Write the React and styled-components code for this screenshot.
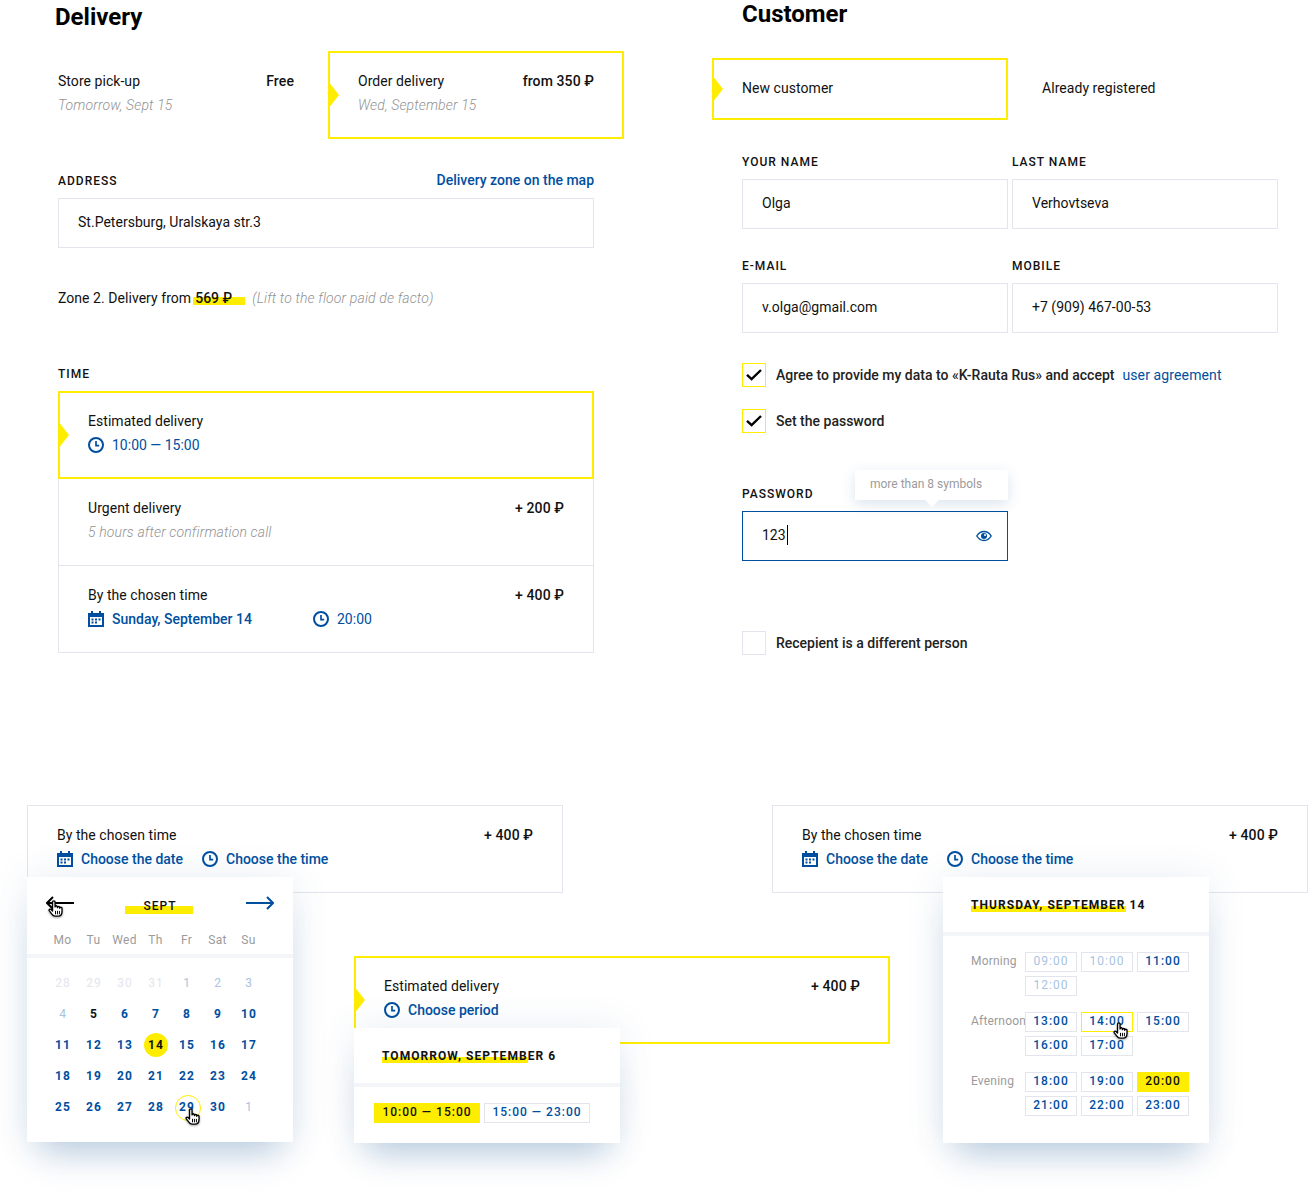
import React from "react";
import styled, { createGlobalStyle, css } from "styled-components";

const YELLOW = "#ffed00";
const BLUE = "#004f9f";
const LINE = "#e3e5ec";
const GREY = "#9b9b9b";

const Global = createGlobalStyle`
  html, body { margin: 0; padding: 0; background: #fff; }
  body { font-family: Roboto, "Noto Sans", sans-serif; font-size: 14px; line-height: 24px; color: #111; }
  * { box-sizing: border-box; }
`;

const Page = styled.div`
  position: relative;
  width: 1308px;
  height: 1193px;
  overflow: hidden;
`;
const Top = styled.div`display: flex; align-items: flex-start;`;
const DeliveryCol = styled.section`width: 536px; margin-left: 58px; padding-top: 3px;`;
const CustomerCol = styled.section`width: 536px; margin-left: 148px;`;
const Title = styled.h1`
  margin: 0 0 0 ${(p) => p.$shift || 0}px;
  font-size: 24px;
  line-height: 28px;
  font-weight: 700;
  color: #000;
`;
const Modes = styled.div`display: flex; width: 566px; margin-top: 20px;`;
const PlainMode = styled.div`width: 270px; padding: 18px 34px 0 0;`;
const selectedFrame = css`
  position: relative;
  border: 2px solid ${YELLOW};
  &::before {
    content: "";
    position: absolute;
    left: 0;
    top: 50%;
    width: 9px;
    height: 23px;
    transform: translateY(-50%);
    background: ${YELLOW};
    clip-path: polygon(0 0, 100% 50%, 0 100%);
  }
`;
const ActiveMode = styled.div`
  ${selectedFrame}
  width: 296px;
  height: 88px;
  padding: 16px 28px;
`;
const Head = styled.div`display: flex; justify-content: space-between; align-items: center;`;
const Name = styled.span`font-weight: 400; letter-spacing: 0.05px; color: #111;`;
const Price = styled.span`font-weight: 500; letter-spacing: 0.1px; color: #111;`;
const Hint = styled.div`font-style: italic; font-weight: 300; letter-spacing: 0.14px; color: #929292;`;
const LabelRow = styled.div`
  display: flex; justify-content: space-between; align-items: center;
  margin-top: ${(p) => p.$top}px;
  height: 16px;
`;
const Label = styled.div`
  font-size: 12px; line-height: 16px; font-weight: 500; letter-spacing: 1px; color: #111;
`;
const TextLink = styled.a`position: relative; top: -1px; color: ${BLUE}; font-weight: 500;`;
const Input = styled.input`
  display: block;
  width: 100%;
  height: 50px;
  margin-top: 9px;
  padding: 0 19px 2px;
  border: 1px solid ${LINE};
  border-radius: 0;
  outline: none;
  background: #fff;
  font: 400 14px Roboto, sans-serif;
  letter-spacing: 0.02px;
  color: #111;
`;
const Zone = styled.div`margin-top: 40px; line-height: 20px; display: flex; letter-spacing: 0.05px;`;
const Amount = styled.span`
  margin-left: 2px;
  padding: 0 13px 0 2px;
  font-weight: 500;
  letter-spacing: 0;
  background: linear-gradient(${YELLOW}, ${YELLOW}) no-repeat 0 9px / 100% 8px;
`;
const ZoneNote = styled(Hint)`margin-left: 7px; line-height: 20px;`;
const TimeList = styled.div`margin-top: 9px;`;
const TimeRow = styled.div`
  height: 87px;
  padding: 17px 29px;
  border: 1px solid ${LINE};
  border-top: 0;
`;
const DemoRow = styled.div`
  ${(p) => p.$selected ? css`
    ${selectedFrame}
    height: 88px;
    padding: 16px 28px;
  ` : css`
    position: relative;
    height: 88px;
    padding: 17px 29px;
    border: 1px solid ${LINE};
  `}
`;
const ActiveTime = styled.div`
  ${selectedFrame}
  height: 88px;
  padding: 16px 28px;
`;
const Choices = styled.div`display: flex; align-items: center;`;
const Choice = styled.div`
  display: flex; align-items: center; gap: 8px;
  width: ${(p) => (p.$w ? p.$w + "px" : "auto")};
  color: ${BLUE};
  font-weight: ${(p) => p.$weight || 500};
  svg { flex: none; }
`;

const Tabs = styled.div`display: flex; margin: 30px 0 0 -30px;`;
const ActiveTab = styled.div`
  ${selectedFrame}
  width: 296px; height: 62px;
  padding: 16px 28px;
`;
const PlainTab = styled.div`padding: 18px 0 0 34px;`;
const Fields = styled.div`
  display: grid;
  grid-template-columns: 266px 266px;
  column-gap: 4px;
  row-gap: 29px;
  margin-top: 34px;
`;
const Check = styled.label`
  display: flex; align-items: center; gap: 10px;
  margin-top: ${(p) => p.$top}px;
  font-weight: 500;
  color: #222;
`;
const Box = styled.span`
  display: flex; align-items: center; justify-content: center;
  flex: none;
  width: 24px; height: 24px;
  border: 1px solid ${(p) => (p.$on ? YELLOW : LINE)};
`;
const AgreeLink = styled.a`margin-left: 8px; color: ${BLUE}; font-weight: 400; letter-spacing: 0.12px;`;
const PasswordField = styled.div`position: relative; width: 266px; margin-top: 53px;`;
const Tooltip = styled.div`
  position: absolute;
  right: 0;
  top: -16px;
  width: 153px;
  height: 30px;
  padding-left: 15px;
  background: #fff;
  font-size: 12px;
  line-height: 28px;
  color: ${GREY};
  box-shadow: 0 4px 14px rgba(30, 90, 150, 0.16);
  &::after {
    content: "";
    position: absolute;
    left: 70px;
    bottom: -7px;
    border: 7px solid transparent;
    border-bottom: 0;
    border-top-color: #fff;
  }
`;
const PasswordBox = styled.div`
  display: flex; align-items: center; justify-content: space-between;
  height: 50px;
  margin-top: 9px;
  padding: 0 15px 0 19px;
  border: 1px solid ${BLUE};
`;
const Typed = styled.span`
  position: relative;
  top: -1px;
  padding-right: 1px;
  border-right: 1px solid #000;
  line-height: 20px;
`;

const Board = styled.div`margin-top: 150px; padding-left: 27px;`;
const BoardRow = styled.div`display: flex; justify-content: space-between;`;
const Demo = styled.div`position: relative; width: 536px;`;
const CenterDemo = styled(Demo)`margin: 63px 0 0 327px;`;
const Popup = styled.div`
  position: absolute;
  z-index: 2;
  left: ${(p) => p.$left || 0}px;
  top: 72px;
  width: 266px;
  background: #fff;
  box-shadow: 0 24px 34px -14px rgba(30, 90, 150, 0.28), 0 0 36px rgba(30, 90, 150, 0.1);
`;
const Nav = styled.div`
  position: relative;
  display: flex; align-items: center; justify-content: space-between;
  height: 52px;
  padding: 0 19px;
`;
const Month = styled.span`
  position: relative; top: 3px; left: -1px;
  padding: 0 16px 0 18px;
  font-size: 12px; line-height: 16px; font-weight: 500; letter-spacing: 1px;
  background: linear-gradient(${YELLOW}, ${YELLOW}) no-repeat 0 8px / 100% 8px;
`;
const Cal = styled.div`
  display: grid;
  grid-template-columns: repeat(7, 31px);
  padding-left: 20px;
`;
const Week = styled(Cal)`margin-top: 3px;`;
const WeekDay = styled.span`
  font-size: 12px; line-height: 16px; text-align: center; color: ${GREY}; letter-spacing: .3px;
`;
const Rule = styled.div`height: 4px; background: #f3f5f9; margin-top: ${(p) => p.$top || 0}px;`;
const Days = styled(Cal)`padding-top: 9px; padding-bottom: 20px;`;
const kinds = {
  off: css`color: ${LINE}; font-weight: 400;`,
  far: css`color: #a9c3e0; font-weight: 400;`,
  black: css`color: #111; font-weight: 700;`,
  on: css`color: ${BLUE}; font-weight: 700;`,
};
const Day = styled.span`
  position: relative;
  height: 31px;
  display: flex; align-items: center; justify-content: center;
  padding-left: 1px;
  font-size: 12px; letter-spacing: 1px;
  z-index: 0;
  ${(p) => kinds[p.$kind]}
  ${(p) => p.$today && css`
    color: #111;
    &::before { content: ""; position: absolute; z-index: -1; left: 3.5px; top: 4px; width: 24px; height: 24px; border-radius: 50%; background: ${YELLOW}; }
  `}
  ${(p) => p.$hover && css`
    &::before { content: ""; position: absolute; z-index: -1; left: 3.5px; top: 4px; width: 24px; height: 24px; border-radius: 50%; border: 1px solid ${YELLOW}; }
  `}
`;
const PopHead = styled.div`height: 55px; padding: 20px 0 0 ${(p) => p.$left}px;`;
const PopTitle = styled.div`
  font-size: 12px; line-height: 16px; font-weight: 700; letter-spacing: 1.05px; color: #111;
  mark { color: inherit; background: linear-gradient(${YELLOW}, ${YELLOW}) no-repeat 0 8px / 100% 8px; }
`;
const Periods = styled.div`display: flex; gap: 4px; padding: 16px 20px 20px;`;
const Slot = styled.span`
  position: relative;
  display: flex; align-items: center; justify-content: center;
  width: ${(p) => p.$w || 52}px;
  height: 20px;
  padding-bottom: 2px;
  font-size: 12px;
  letter-spacing: 1px;
  font-weight: ${(p) => (p.$dim ? 400 : 500)};
  color: ${(p) => (p.$pick ? "#111" : p.$dim ? "#a9c3e0" : BLUE)};
  background: ${(p) => (p.$pick ? YELLOW : "#fff")};
  border: 1px solid ${(p) => (p.$pick || p.$hover ? YELLOW : LINE)};
`;
const Groups = styled.div`display: grid; gap: 16px; padding: 16px 0 27px 28px;`;
const Group = styled.div`display: grid; grid-template-columns: 54px 164px; align-items: start;`;
const GroupName = styled.span`font-size: 12px; line-height: 18px; color: ${GREY}; letter-spacing: .2px; white-space: nowrap;`;
const Slots = styled.div`display: grid; grid-template-columns: repeat(3, 52px); gap: 4px;`;
const Cursor = styled.svg`
  position: absolute;
  z-index: 3;
  left: ${(p) => p.$x}px;
  top: ${(p) => p.$y}px;
  filter: drop-shadow(0 1px 1px rgba(0, 0, 0, 0.35));
`;

const Clock = () => (
  <svg width="16" height="16" viewBox="0 0 16 16" fill="none" stroke={BLUE} strokeWidth="2">
    <circle cx="8" cy="8" r="7" />
    <path d="M8 4v4.600h3.200" strokeWidth="1.700" />
  </svg>
);
const Calendar = () => (
  <svg width="16" height="16" viewBox="0 0 16 16" fill={BLUE}>
    <path d="M3 0h2v2h6V0h2v2h3v14H0V2h3zM2 6v8h12V6z" fillRule="evenodd" />
    <path d="M3.500 7.500h2v2h-2zM7 7.500h2v2H7zM10.500 7.500h2v2h-2zM3.500 10.500h2v2h-2zM7 10.500h2v2H7z" />
  </svg>
);
const Eye = () => (
  <svg width="16" height="12" viewBox="0 0 16 12" fill="none" stroke={BLUE}>
    <path d="M.8 6C2.600 3 5 1.500 8 1.500S13.400 3 15.200 6c-1.800 3-4.200 4.500-7.200 4.500S2.600 9 .8 6z" strokeWidth="1.400" />
    <circle cx="8" cy="6" r="3" fill={BLUE} stroke="none" />
    <circle cx="9" cy="5" r="1" fill="#fff" stroke="none" />
  </svg>
);
const Tick = () => (
  <svg width="16" height="12" viewBox="0 0 16 12" fill="none" stroke="#000" strokeWidth="2.400">
    <path d="M1 5.800l4.600 4.400L15 1" />
  </svg>
);
const Arrow = ({ color, left }) => (
  <svg width="28" height="14" viewBox="0 0 28 14" fill="none" stroke={color} strokeWidth="2" style={left ? { transform: "scaleX(-1)" } : undefined}>
    <path d="M0 7h27M21 1l6 6-6 6" />
  </svg>
);
const Hand = ({ x, y }) => (
  <Cursor $x={x} $y={y} width="17" height="20" viewBox="0 0 19 21" fill="#fff" stroke="#000" strokeWidth="1.500" strokeLinejoin="round" strokeLinecap="round">
    <path d="M6.200 12.800V2.800a1.400 1.400 0 0 1 2.800 0V8.200a1.300 1.300 0 0 1 2.600 0V9a1.300 1.300 0 0 1 2.600 0v.8a1.300 1.300 0 0 1 2.600 0v3.400c0 3-1.600 5.300-4.400 5.300H9.200c-2 0-3-1-4-2.600L2.400 12.400c-.7-1.200 1-2.400 2.100-1.300z" />
    <path d="M9.500 13v3M11.700 13v3M13.900 13v3" fill="none" strokeWidth="1.100" />
  </Cursor>
);

const Days1 = [
  ["28", "off"], ["29", "off"], ["30", "off"], ["31", "off"], ["1", "far"], ["2", "far"], ["3", "far"],
  ["4", "far"], ["5", "black"], ...[6, 7, 8, 9, 10, 11, 12, 13, 14, 15, 16, 17, 18, 19, 20, 21, 22, 23, 24, 25, 26, 27, 28, 29, 30].map((d) => [String(d), "on"]),
  ["1", "far"],
];

const timeGroups = [
  { name: "Morning", slots: [["09:00", "dim"], ["10:00", "dim"], ["11:00"], ["12:00", "dim"]] },
  { name: "Afternoon", slots: [["13:00"], ["14:00", "hover"], ["15:00"], ["16:00"], ["17:00"]] },
  { name: "Evening", slots: [["18:00"], ["19:00"], ["20:00", "pick"], ["21:00"], ["22:00"], ["23:00"]] },
];

const ChosenRow = () => (
  <DemoRow>
    <Head><Name>By the chosen time</Name><Price>+ 400 ₽</Price></Head>
    <Choices>
      <Choice $w={145}><Calendar />Choose the date</Choice>
      <Choice><Clock />Choose the time</Choice>
    </Choices>
  </DemoRow>
);

export default function App() {
  return (
    <Page>
      <Global />
      <Top>
        <DeliveryCol>
          <Title $shift={-3}>Delivery</Title>
          <Modes>
            <PlainMode>
              <Head><Name>Store pick-up</Name><Price>Free</Price></Head>
              <Hint>Tomorrow, Sept 15</Hint>
            </PlainMode>
            <ActiveMode>
              <Head><Name>Order delivery</Name><Price>from 350 ₽</Price></Head>
              <Hint>Wed, September 15</Hint>
            </ActiveMode>
          </Modes>
          <LabelRow $top={34}>
            <Label>ADDRESS</Label>
            <TextLink>Delivery zone on the map</TextLink>
          </LabelRow>
          <Input readOnly value="St.Petersburg, Uralskaya str.3" />
          <Zone>
            Zone 2. Delivery from
            <Amount>569 ₽</Amount>
            <ZoneNote>(Lift to the floor paid de facto)</ZoneNote>
          </Zone>
          <LabelRow $top={58}><Label>TIME</Label></LabelRow>
          <TimeList>
            <ActiveTime>
              <Name>Estimated delivery</Name>
              <Choice $weight={400}><Clock />10:00 — 15:00</Choice>
            </ActiveTime>
            <TimeRow>
              <Head><Name>Urgent delivery</Name><Price>+ 200 ₽</Price></Head>
              <Hint>5 hours after confirmation call</Hint>
            </TimeRow>
            <TimeRow>
              <Head><Name>By the chosen time</Name><Price>+ 400 ₽</Price></Head>
              <Choices>
                <Choice $w={225}><Calendar />Sunday, September 14</Choice>
                <Choice $weight={400}><Clock />20:00</Choice>
              </Choices>
            </TimeRow>
          </TimeList>
        </DeliveryCol>

        <CustomerCol>
          <Title>Customer</Title>
          <Tabs>
            <ActiveTab><Name>New customer</Name></ActiveTab>
            <PlainTab><Name>Already registered</Name></PlainTab>
          </Tabs>
          <Fields>
            <div><Label>YOUR NAME</Label><Input readOnly value="Olga" /></div>
            <div><Label>LAST NAME</Label><Input readOnly value="Verhovtseva" /></div>
            <div><Label>E-MAIL</Label><Input readOnly value="v.olga@gmail.com" /></div>
            <div><Label>MOBILE</Label><Input readOnly value="+7 (909) 467-00-53" /></div>
          </Fields>
          <Check $top={30}>
            <Box $on><Tick /></Box>
            <span>Agree to provide my data to «K-Rauta Rus» and accept<AgreeLink>user agreement</AgreeLink></span>
          </Check>
          <Check $top={22}>
            <Box $on><Tick /></Box>
            <span>Set the password</span>
          </Check>
          <PasswordField>
            <Label>PASSWORD</Label>
            <Tooltip>more than 8 symbols</Tooltip>
            <PasswordBox><Typed>123</Typed><Eye /></PasswordBox>
          </PasswordField>
          <Check $top={70}>
            <Box />
            <span>Recepient is a different person</span>
          </Check>
        </CustomerCol>
      </Top>

      <Board>
        <BoardRow>
          <Demo>
            <ChosenRow />
            <Popup>
              <Nav>
                <Arrow color="#000" left />
                <Month>SEPT</Month>
                <Arrow color={BLUE} />
              </Nav>
              <Week>
                {["Mo", "Tu", "Wed", "Th", "Fr", "Sat", "Su"].map((d) => <WeekDay key={d}>{d}</WeekDay>)}
              </Week>
              <Rule $top={6} />
              <Days>
                {Days1.map(([d, k], i) => (
                  <Day key={i} $kind={k} $today={i === 17} $hover={i === 32}>{d}</Day>
                ))}
              </Days>
              <Hand x={20} y={22} />
              <Hand x={157} y={230} />
            </Popup>
          </Demo>
          <Demo>
            <ChosenRow />
            <Popup $left={171}>
              <PopHead $left={28}>
                <PopTitle><mark>THURSDAY, SEPTEMBER</mark> 14</PopTitle>
              </PopHead>
              <Rule />
              <Groups>
                {timeGroups.map((g) => (
                  <Group key={g.name}>
                    <GroupName>{g.name}</GroupName>
                    <Slots>
                      {g.slots.map(([t, k]) => (
                        <Slot key={t} $dim={k === "dim"} $hover={k === "hover"} $pick={k === "pick"}>
                          {t}
                        </Slot>
                      ))}
                    </Slots>
                  </Group>
                ))}
              </Groups>
              <Hand x={169} y={144} />
            </Popup>
          </Demo>
        </BoardRow>
        <CenterDemo>
          <DemoRow $selected>
            <Head><Name>Estimated delivery</Name><Price>+ 400 ₽</Price></Head>
            <Choice><Clock />Choose period</Choice>
          </DemoRow>
          <Popup>
            <PopHead $left={28}>
              <PopTitle><mark>TOMORROW, SEPTEMB</mark>ER 6</PopTitle>
            </PopHead>
            <Rule />
            <Periods>
              <Slot $w={106} $pick>10:00 — 15:00</Slot>
              <Slot $w={106}>15:00 — 23:00</Slot>
            </Periods>
          </Popup>
        </CenterDemo>
      </Board>
    </Page>
  );
}
